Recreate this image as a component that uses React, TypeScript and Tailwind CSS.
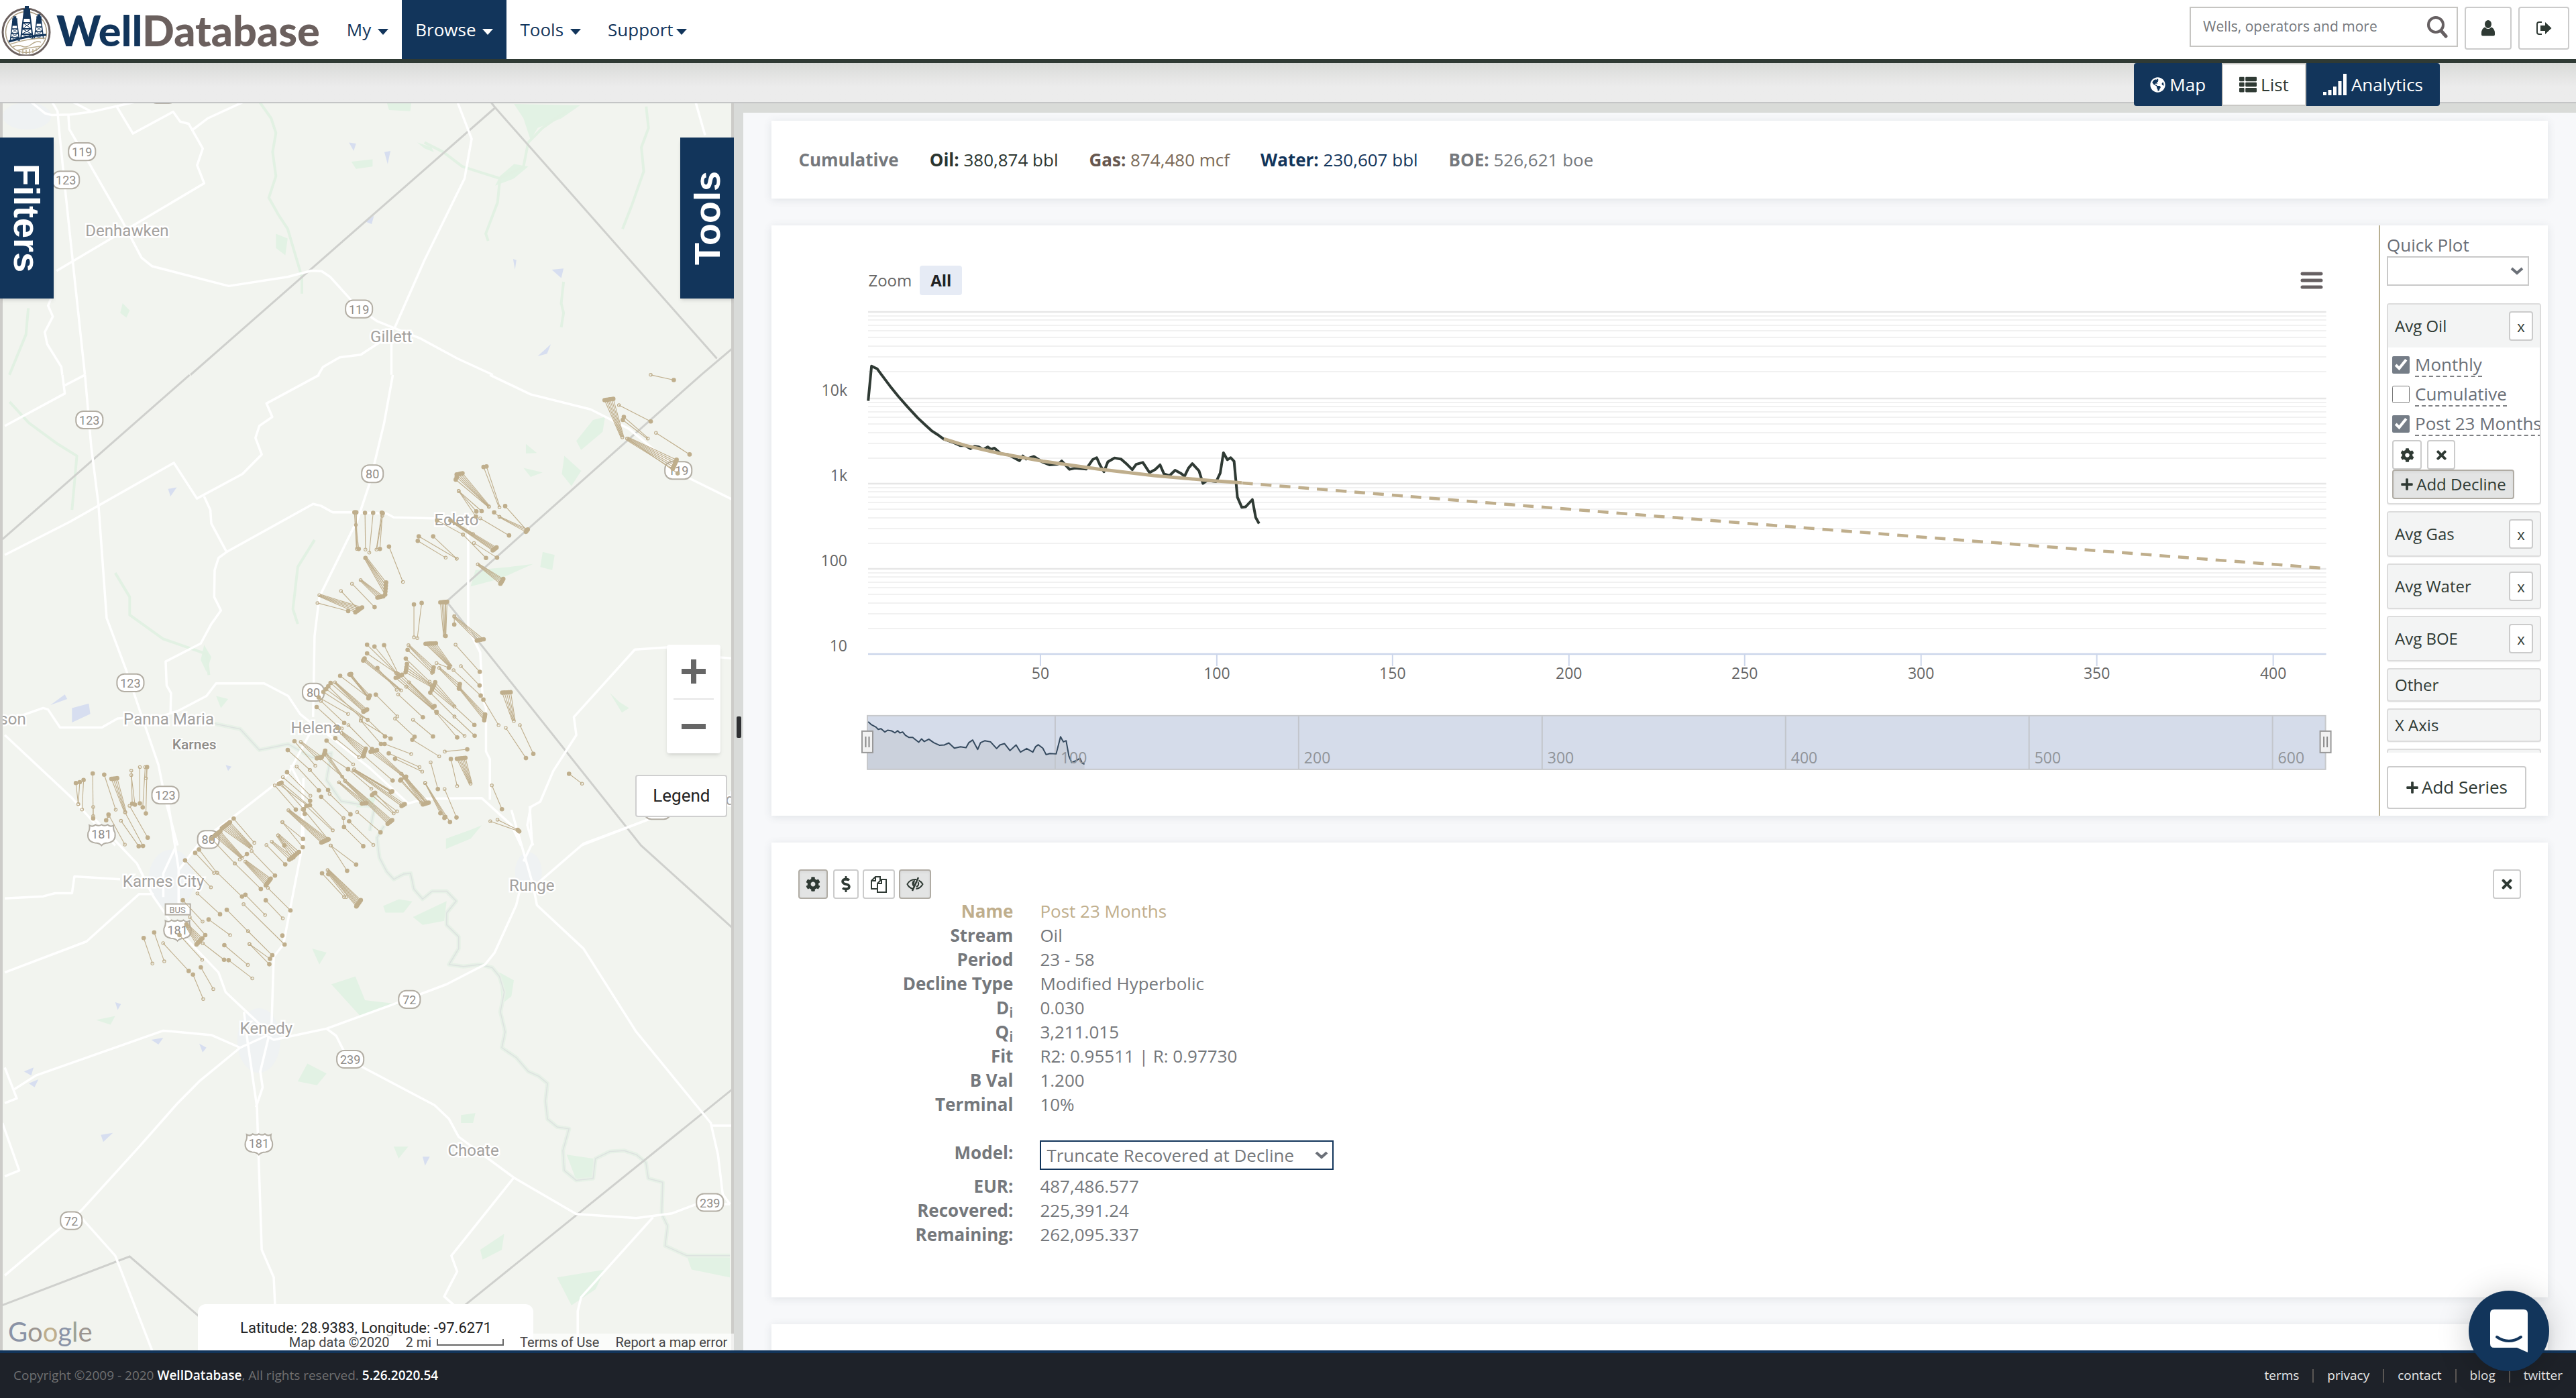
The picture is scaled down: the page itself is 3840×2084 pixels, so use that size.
import React from "react";
import { FaCog, FaTimes, FaPlus, FaGlobeAmericas, FaThList, FaDollarSign } from "react-icons/fa";

/* ---------- small icons ---------- */

const Caret = () => (
  <svg viewBox="0 0 16 9" className="w-4 h-[9px]" fill="currentColor" aria-hidden="true">
    <path d="M0 0h16L8 9z" />
  </svg>
);

const Chevron = () => (
  <svg viewBox="0 0 20 14" className="pointer-events-none absolute right-2 top-1/2 -mt-[7px] w-5 h-[14px]" fill="none" stroke="#6b7078" strokeWidth="4" aria-hidden="true">
    <path d="M2 3l8 7 8-7" />
  </svg>
);

const SearchIcon = () => (
  <svg viewBox="0 0 32 34" className="w-8 h-[34px]" fill="none" stroke="#666062" aria-hidden="true">
    <circle cx="13" cy="14" r="11" strokeWidth="4" />
    <path d="M21 23l7 8" strokeWidth="5" strokeLinecap="round" />
  </svg>
);

const UserIcon = () => (
  <svg viewBox="0 0 20 24" className="w-5 h-6" fill="#2f3a34" aria-hidden="true">
    <ellipse cx="10" cy="6" rx="5" ry="6" />
    <path d="M5 10.500q5 5 10 0 5 2.500 5 9v2q0 2-2 2H2q-2 0-2-2v-2q0-6.500 5-9z" />
  </svg>
);

const LogoutIcon = () => (
  <svg viewBox="0 0 24 22" className="w-6 h-[22px]" aria-hidden="true">
    <path d="M9 2H5Q2 2 2 5v12q0 3 3 3h4" fill="none" stroke="#2f3a34" strokeWidth="2" />
    <path d="M7 7h7V2l9.500 9-9.500 9v-5H7z" fill="#2f3a34" />
  </svg>
);

const SignalIcon = () => (
  <svg viewBox="0 0 36 32" className="w-9 h-8" fill="currentColor" aria-hidden="true">
    <path d="M0 27h5v5H0zM7.500 24h5v8h-5zM15 19h5v13h-5zM22.500 11h5v21h-5zM30 0h5v32h-5z" />
  </svg>
);

const CopyIcon = () => (
  <svg viewBox="0 0 26 26" className="w-[26px] h-[26px]" fill="#fff" stroke="#2f3a34" strokeWidth="2" aria-hidden="true">
    <path d="M8 2h7v18H2V8z" />
    <path d="M8 2v6H2" fill="none" />
    <path d="M17 6h7v19H11V12z" />
    <path d="M17 6v6h-6" fill="none" />
  </svg>
);

const EyeOffIcon = () => (
  <svg viewBox="0 0 26 22" className="w-[26px] h-[22px]" fill="none" stroke="#2f3a34" strokeWidth="2" aria-hidden="true">
    <path d="M10 18C6 17 3 14.500 1.500 11 4 6.500 8 4 13 4h2" />
    <path d="M18.500 5.500c2.500 1 4.500 3 6 5.500-2 4-5.500 6.500-10 7" />
    <path d="M18 1L9 21" strokeWidth="2.500" />
    <path d="M13 5c-5 0-6 7-2 10z" fill="#2f3a34" stroke="none" />
    <path d="M17.500 8c2 3 0 6-2.500 7" />
  </svg>
);

const Derrick = ({ x, y, s }: { x: number; y: number; s: number }) => (
  <g transform={`translate(${x} ${y}) scale(${s})`} stroke="#12355b" fill="none" strokeWidth="2">
    <path d="M-4 0L-9 40M4 0l5 40M-6 16H6M-7 25H7M-8 33H8" />
    <path d="M-6 16L7 25M6 16L-7 25M-7 25L8 33M7 25L-8 33M-8 33L9 40M8 33L-9 40" strokeWidth="1" />
    <path d="M-5-5H5V10H-5zM-3-9h6v4h-6z" fill="#12355b" stroke="none" />
  </g>
);

const LogoMark = () => (
  <svg viewBox="0 0 76 78" className="w-[76px] h-[78px]" aria-hidden="true">
    <circle cx="39" cy="43" r="35" fill="#fff" stroke="#6b605e" strokeWidth="3" />
    <circle cx="39" cy="43" r="30.500" fill="none" stroke="#a89a80" strokeWidth="1.500" />
    <Derrick x={22} y={26} s={0.75} />
    <Derrick x={58} y={23} s={0.75} />
    <Derrick x={40} y={13} s={1} />
    <path d="M13 57q28-9 56-10" stroke="#12355b" strokeWidth="3" fill="none" />
    <path d="M15 61q26-9 52-9M19 65q8-4 14-1t14-3 14-3M26 70q16-4 34-6M29 70v5M34 69v6M39 69v7M44 68v7M49 68v6M54 67v4" stroke="#b9ab8c" strokeWidth="1.500" fill="none" />
  </svg>
);

/* ---------- map ---------- */

type Tile = { ox: number; oy: number; sx: number; sy: number };
const NORTH: Tile = { ox: 0, oy: 0, sx: 0.7015, sy: 0.3571 };
const MID: Tile = { ox: 0, oy: 560, sx: 0.7143, sy: 0.4464 };
const SOUTH: Tile = { ox: 0, oy: 1160, sx: 0.7143, sy: 0.5893 };
const HELENA: Tile = { ox: 400, oy: 940, sx: 0.3333, sy: 0.3333 };
const KARNES: Tile = { ox: 180, oy: 1140, sx: 0.3333, sy: 0.3333 };

const px = (t: Tile, x: number) => Math.round((t.ox + x * t.sx) * 10) / 10;
const py = (t: Tile, y: number) => Math.round((t.oy + y * t.sy) * 10) / 10;
const line = (t: Tile, p: number[]) => {
  let out = "";
  for (let i = 0; i < p.length; i += 2) out += `${px(t, p[i])},${py(t, p[i + 1])} `;
  return out;
};

const roads: [Tile, number[][]][] = [
  [NORTH, [
    [65, 430, 95, 478, 110, 486, 150, 484, 195, 472, 285, 432],
    [110, 430, 122, 470, 126, 560, 140, 830, 160, 1200, 180, 1568],
    [145, 486, 147, 545, 190, 690, 260, 930, 300, 1080, 322, 1115, 485, 1198, 610, 1160, 660, 1134, 682, 1136, 700, 1160, 760, 1290, 800, 1345, 838, 1375, 890, 1415, 970, 1500, 1045, 1568],
    [155, 432, 192, 470],
    [248, 452, 282, 563, 367, 472, 382, 513, 400, 522, 430, 625, 418, 695, 433, 770, 270, 960, 120, 1135],
    [408, 548, 440, 500, 515, 432],
    [970, 432, 1000, 585, 985, 750, 900, 1090, 836, 1375],
    [830, 1400, 830, 1568],
    [815, 1420, 765, 1484, 720, 1495, 685, 1535, 675, 1568],
    [1475, 432, 1495, 570],
    [108, 1250, 102, 1280, 112, 1325, 95, 1390, 100, 1440, 130, 1535, 132, 1568],
  ]],
  [MID, [
    [177, 0, 190, 240, 205, 430, 222, 810, 262, 980, 300, 1160, 330, 1300, 345, 1420, 370, 1568],
    [130, 0, 135, 62, 10, 170], [135, 35, 177, 0],
    [10, 600, 145, 490, 362, 293, 410, 412, 505, 330, 545, 265, 532, 210, 540, 170, 567, 140, 555, 95, 665, 0],
    [425, 405, 438, 450, 440, 495, 472, 590, 455, 610, 447, 650, 446, 740, 460, 785, 440, 830, 418, 895, 345, 955, 347, 1035, 356, 1060, 355, 1130],
    [472, 590, 652, 430, 668, 436, 693, 458, 740, 458, 805, 462, 820, 475, 905, 478, 975, 490],
    [818, 0, 800, 160, 770, 360, 745, 480, 665, 740, 655, 870, 652, 1140],
    [975, 490, 975, 845, 1000, 925, 1005, 1080, 1012, 1110, 1012, 1255, 1020, 1280, 1020, 1415],
    [1020, 0, 1105, 65, 1230, 115, 1310, 180, 1430, 340, 1525, 415],
    [0, 1160, 90, 1110, 100, 1115, 125, 1175, 212, 1175, 245, 1145, 340, 1135, 370, 1120, 430, 1070, 450, 1028, 550, 1028, 600, 1070, 625, 1130, 652, 1165],
    [10, 1200, 150, 1410, 200, 1500, 240, 1568],
    [680, 1195, 770, 1310, 850, 1428, 885, 1412, 1003, 1410, 1065, 1500, 1085, 1568],
    [650, 1180, 600, 1330, 480, 1480, 420, 1550, 372, 1650],
    [605, 1300, 630, 1380, 632, 1568],
    [1525, 945, 1490, 940, 1390, 908, 1322, 915, 1195, 1140, 1200, 1200, 1152, 1320, 1125, 1422, 1105, 1440, 1098, 1500, 1110, 1568],
    [1210, 1568, 1385, 1460],
  ]],
  [SOUTH, [
    [195, 100, 285, 215, 320, 300, 360, 370, 455, 490, 470, 540, 540, 620, 555, 650, 570, 660, 610, 650, 680, 632, 820, 570, 930, 520, 1010, 470, 1030, 440, 1075, 320, 1085, 270],
    [350, 60, 365, 175, 372, 230, 372, 320],
    [365, 175, 340, 240, 340, 300],
    [632, 0, 628, 180, 590, 420, 570, 450, 565, 640],
    [10, 303, 90, 298, 115, 290, 150, 290, 155, 248, 250, 255],
    [10, 490, 180, 412, 290, 292, 320, 292],
    [500, 680, 440, 648, 340, 637, 75, 750, 30, 785],
    [555, 650, 500, 680, 415, 765, 370, 820, 290, 930, 170, 1090, 10, 1255],
    [170, 1110, 240, 1205, 318, 1448],
    [508, 590, 515, 660, 535, 830, 545, 1190, 570, 1260, 573, 1340],
    [560, 650, 542, 740, 547, 780, 533, 830],
    [680, 632, 700, 650, 725, 710, 905, 825, 935, 860, 955, 905, 1070, 1008, 1200, 1100, 1325, 1110, 1400, 1098, 1450, 1075, 1520, 1075],
    [1070, 1008, 940, 1205, 952, 1245, 925, 1308, 950, 1335],
    [1360, 1108, 1210, 1310, 1203, 1345, 1203, 1448],
    [1065, 80, 1110, 270, 1118, 320, 1215, 430, 1325, 640, 1480, 870, 1495, 950, 1505, 1050, 1520, 1075],
    [1480, 877, 1525, 877], [1115, 270, 1215, 165, 1370, 95], [1103, 70, 1108, 165, 1090, 210],
    [10, 730, 35, 808, 10, 820], [5, 870, 40, 990, 10, 1005],
  ]],
];

const borders: [Tile, number[]][] = [
  [NORTH, [1040, 430, 1050, 455, 404, 1568]],
  [NORTH, [1050, 455, 1520, 1500]],
  [MID, [395, 0, 5, 548]],
  [MID, [1530, -95, 1460, 0, 930, 755, 1335, 1568, 1530, 1850]],
  [SOUTH, [1530, 780, 968, 1330]],
  [SOUTH, [5, 1330, 270, 1207, 440, 1385]],
];

const streams: [Tile, number[]][] = [
  [NORTH, [550, 430, 575, 500, 585, 560, 578, 640, 585, 740, 570, 830, 590, 900, 610, 960, 625, 1060, 640, 1160, 640, 1230]],
  [NORTH, [1370, 450, 1375, 540, 1360, 620, 1365, 720, 1340, 860, 1320, 960]],
  [NORTH, [1200, 470, 1150, 540, 1120, 600, 1110, 700, 1060, 750, 1055, 850, 1030, 980, 1035, 1010]],
  [NORTH, [900, 600, 940, 640, 980, 700, 1020, 725, 1060, 750]],
  [NORTH, [1195, 1180, 1190, 1270, 1195, 1310, 1190, 1370]],
  [NORTH, [60, 1290, 55, 1400, 20, 1568]],
  [MID, [20, 90, 60, 160, 120, 230, 160, 270, 150, 450]],
  [MID, [240, 660, 270, 740, 270, 800, 340, 880, 430, 930, 435, 1000]],
  [MID, [655, 550, 620, 640, 610, 780, 620, 830]],
];

const rivers: [Tile, number[]][] = [
  [SOUTH, [1000, 470, 1025, 478, 1040, 500, 1050, 540, 1042, 590, 1052, 640, 1045, 680, 1075, 705, 1100, 740, 1122, 752, 1140, 770, 1136, 815, 1140, 860, 1160, 880, 1185, 885, 1172, 940, 1175, 990, 1200, 1015, 1235, 1010, 1240, 960, 1270, 942, 1300, 940, 1325, 950, 1345, 970, 1350, 1010, 1380, 1020, 1378, 1100, 1390, 1130, 1385, 1180, 1430, 1205, 1520, 1205]],
  [SOUTH, [800, 120, 785, 150, 790, 200, 805, 235, 820, 255, 840, 242, 855, 240, 862, 280, 880, 305, 900, 285, 930, 285, 950, 310, 930, 340, 930, 370, 955, 400, 955, 430, 935, 470, 965, 475, 1000, 470]],
  [MID, [440, 1160, 500, 1180, 540, 1250, 600, 1230, 650, 1275, 690, 1260, 680, 1350, 710, 1420, 780, 1440, 770, 1520]],
];

const parks: [Tile, number[]][] = [
  [NORTH, [820, 432, 872, 435, 870, 470, 825, 465]],
  [NORTH, [1090, 440, 1230, 445, 1190, 500, 1140, 540, 1125, 590, 1110, 500]],
  [NORTH, [1090, 690, 1120, 700, 1090, 750, 1050, 780, 1060, 740]],
  [NORTH, [585, 980, 610, 1000, 605, 1070, 585, 1040]],
  [NORTH, [745, 680, 790, 670, 790, 700, 755, 710]],
  [NORTH, [885, 600, 915, 620, 920, 640, 900, 625]],
  [NORTH, [260, 1270, 275, 1300, 268, 1330, 255, 1310]],
  [MID, [1235, 150, 1260, 140, 1255, 190, 1210, 250, 1200, 220]],
  [MID, [1175, 270, 1210, 320, 1190, 370, 1170, 330]],
  [MID, [1095, 230, 1118, 260, 1095, 262]],
  [MID, [1090, 310, 1130, 325, 1105, 340]],
  [MID, [990, 650, 1060, 640, 1110, 630, 1040, 680, 980, 705]],
  [MID, [1130, 590, 1155, 600, 1150, 650, 1125, 640]],
  [MID, [1270, 1060, 1290, 1090, 1310, 1110, 1295, 1125]],
  [MID, [425, 900, 440, 940, 430, 990, 418, 950]],
  [MID, [450, 1070, 475, 1080, 460, 1110]],
  [SOUTH, [690, 520, 740, 500, 760, 560, 830, 570, 770, 590, 750, 600]],
  [SOUTH, [860, 350, 930, 310, 925, 360, 880, 370]],
  [SOUTH, [1040, 490, 1070, 510, 1065, 550, 1045, 570]],
  [SOUTH, [650, 430, 680, 440, 665, 470]],
  [SOUTH, [640, 720, 680, 745, 660, 775, 620, 765]],
  [SOUTH, [1180, 950, 1235, 960, 1235, 1010, 1200, 1015]],
  [SOUTH, [1000, 1190, 1050, 1150, 1045, 1190, 1005, 1215]],
  [SOUTH, [1160, 1260, 1260, 1240, 1240, 1290, 1190, 1330]],
  [SOUTH, [1430, 1205, 1520, 1210, 1520, 1260, 1440, 1240]],
  [SOUTH, [960, 850, 990, 845, 985, 870, 960, 870]],
  [SOUTH, [820, 930, 850, 930, 830, 960]],
  [SOUTH, [200, 610, 240, 600, 230, 622]],
  [HELENA, [400, 760, 480, 740, 460, 790, 390, 790]],
  [HELENA, [790, 930, 900, 890, 950, 870, 900, 930, 790, 975]],
  [HELENA, [510, 1230, 580, 1200, 640, 1210, 600, 1260, 520, 1260]],
];

const lakes: [Tile, number[]][] = [
  [NORTH, [740, 600, 755, 605, 750, 635]], [NORTH, [815, 640, 828, 635, 822, 690]],
  [NORTH, [775, 930, 793, 905, 788, 940]], [NORTH, [1170, 1130, 1195, 1125, 1190, 1165]],
  [NORTH, [1088, 1085, 1095, 1090, 1092, 1130]], [NORTH, [1140, 1490, 1168, 1440, 1160, 1480]],
  [MID, [150, 1110, 185, 1095, 188, 1130, 150, 1158]], [MID, [105, 1100, 135, 1065, 140, 1080]],
  [MID, [470, 1300, 482, 1305, 475, 1320]], [MID, [350, 380, 368, 375, 355, 405]],
  [SOUTH, [50, 740, 70, 730, 65, 750]], [SOUTH, [60, 770, 80, 760, 72, 780]],
  [SOUTH, [315, 660, 340, 655, 330, 672]], [SOUTH, [415, 670, 430, 680, 422, 692]],
  [SOUTH, [210, 900, 235, 895, 215, 918]], [SOUTH, [880, 955, 895, 955, 885, 978]],
  [SOUTH, [240, 565, 252, 570, 245, 585]],
];

/* surface x, surface y, bottom x, bottom y, lateral count, pad width, pad height */
type Well = number[];
const wells: [Tile, Well[]][] = [
  [HELENA, [
    [438, 64, 577, 200], [471, 72, 572, 192], [514, 66, 578, 195], [438, 103, 566, 190], [424, 130, 590, 268, 3, 6, 10], [484, 168, 570, 265],
    [619, 87, 728, 190], [733, 175, 623, 66, 3, 4, 20], [611, 126, 717, 229], [616, 150, 720, 240], [612, 176, 726, 250, 3, 4, 22],
    [722, 59, 810, 160, 6, 46, 2], [941, 185, 833, 64], [940, 246, 857, 160], [850, 250, 760, 168, 3, 4, 20], [803, 167, 748, 146], [945, 291, 824, 178],
    [963, 388, 852, 260, 4, 4, 26], [957, 309, 1025, 423], [1060, 277, 1093, 405, 5, 38, 2], [1147, 570, 1057, 435], [1180, 551, 1120, 423],
    [885, 531, 785, 541], [812, 574, 840, 695], [858, 571, 900, 684, 6, 38, 4], [754, 708, 722, 589], [765, 816, 697, 681], [785, 835, 697, 681, 2, 4, 4],
    [808, 855, 697, 681], [837, 835, 784, 708], [1040, 798, 995, 692], [1117, 897, 988, 852], [1110, 890, 1020, 845], [732, 473, 643, 399],
    [650, 475, 563, 394], [477, 287, 573, 384], [687, 388, 577, 286], [640, 488, 760, 562], [720, 278, 828, 385], [735, 248, 828, 340, 4, 14, 32],
    [917, 422, 828, 340], [918, 470, 828, 385], [580, 205, 730, 345, 4, 28, 14], [736, 340, 626, 232, 2, 6, 4], [748, 364, 613, 252],
    [840, 478, 748, 370], [748, 364, 873, 471], [318, 203, 445, 300], [363, 196, 447, 302, 3, 8, 2], [447, 297, 363, 200, 2, 6, 12],
    [430, 358, 295, 232, 4, 16, 10], [275, 235, 420, 360], [265, 250, 412, 392], [255, 262, 440, 398], [243, 275, 440, 400], [222, 299, 353, 373], [336, 413, 232, 315],
    [213, 342, 315, 435], [305, 435, 325, 438], [460, 530, 355, 423], [518, 473, 440, 398], [543, 483, 410, 403], [500, 507, 410, 403], [516, 507, 635, 552],
    [426, 545, 325, 458, 5, 12, 34], [296, 481, 402, 566], [257, 492, 376, 598], [468, 538, 590, 640, 4, 28, 8], [535, 549, 672, 610], [563, 573, 684, 630],
    [552, 670, 425, 560], [114, 495, 207, 604], [225, 568, 142, 498, 3, 22, 6], [84, 534, 183, 623], [223, 714, 124, 608], [264, 713, 183, 623],
    [249, 545, 340, 670, 3, 4, 16], [353, 619, 249, 550], [230, 570, 327, 653], [353, 619, 457, 707], [547, 720, 380, 620, 4, 6, 4], [599, 780, 378, 625, 3, 14, 8],
    [81, 633, 185, 738], [184, 761, 62, 655], [120, 800, 26, 692], [50, 683, 175, 782, 2, 12, 6], [175, 782, 285, 892, 2, 16, 4], [155, 798, 50, 680], [160, 819, 150, 800],
    [425, 772, 313, 678, 3, 20, 2], [540, 855, 340, 672, 5, 20, 16], [467, 730, 557, 817, 2, 14, 10], [467, 728, 572, 808], [700, 773, 592, 640, 5, 26, 8],
    [588, 668, 680, 770, 2, 4, 4], [609, 655, 700, 768, 2, 6, 4], [364, 821, 271, 730], [233, 743, 333, 838], [335, 878, 333, 838], [250, 940, 87, 803, 6, 32, 14],
    [155, 800, 262, 930], [152, 931, 60, 856], [151, 968, 60, 856], [118, 1002, 41, 915, 5, 32, 26], [100, 1018, 13, 943, 3, 18, 10], [69, 960, 41, 915],
    [421, 963, 335, 878], [358, 852, 466, 957], [498, 901, 394, 811], [389, 1045, 276, 960], [349, 1073, 276, 960], [237, 1084, 335, 1190],
    [400, 1218, 262, 1070, 7, 20, 28], [265, 1088, 345, 1190],
  ]],
  [KARNES, [
    [503, 240, 595, 348], [468, 270, 580, 368, 7, 36, 28], [430, 307, 540, 415, 6, 26, 20], [404, 330, 508, 440], [624, 554, 508, 440], [687, 494, 583, 385],
    [657, 523, 555, 432, 6, 22, 30], [348, 378, 427, 480], [331, 393, 415, 482], [286, 426, 401, 547], [442, 667, 341, 574], [540, 588, 430, 482],
    [276, 605, 364, 699], [472, 647, 567, 743], [675, 850, 567, 743], [730, 802, 547, 622], [555, 580, 643, 670], [756, 650, 656, 550], [646, 605, 722, 685],
    [720, 762, 720, 762], [391, 690, 487, 760], [376, 760, 307, 680], [350, 788, 292, 715, 6, 26, 28], [292, 712, 300, 720], [261, 760, 362, 870],
    [460, 870, 365, 797], [461, 805, 566, 893], [480, 872, 586, 953], [665, 866, 573, 800], [662, 890, 573, 800], [302, 920, 188, 796],
    [148, 748, 193, 877], [101, 773, 140, 887], [321, 936, 367, 1045], [356, 904, 412, 1001], [733, 444, 649, 358],
    [50, 173, 46, 26], [62, 178, 46, 46], [84, 172, 84, 10], [97, 190, 108, 10], [116, 10, 111, 60], [111, 217, 116, 10], [119, 325, 38, 183],
    [98, 362, 18, 212], [79, 363, 0, 250], [562, 398, 530, 422],
  ]],
  [MID, [
    [158, 1360, 163, 1430], [166, 1357, 163, 1430], [174, 1350, 171, 1448], [193, 1328, 194, 1470], [194, 1478, 194, 1440], [217, 1332, 241, 1449],
    [238, 1345, 261, 1457, 4, 12, 2], [226, 1465, 260, 1565], [221, 1484, 226, 1470],
    [1268, 82, 1296, 208, 6, 18, 4], [1405, 298, 1306, 212, 6, 8, 30], [1355, 155, 1289, 101], [1298, 145, 1349, 212, 2, 2, 10], [1436, 265, 1366, 193],
    [1403, 17, 1355, 0], [1411, 328, 1306, 212], [957, 330, 1018, 438, 4, 12, 4], [950, 345, 1018, 440, 2, 2, 8], [1010, 306, 1040, 441, 2, 6, 2],
    [1003, 454, 955, 387], [991, 472, 955, 387], [992, 455, 955, 387], [1052, 437, 1097, 518], [1097, 519, 1040, 473, 3, 4, 8], [1060, 535, 1000, 478], [1029, 458, 1040, 473],
    [740, 458, 743, 580, 3, 4, 0], [760, 460, 761, 582], [777, 460, 769, 592], [796, 460, 784, 582, 2, 2, 2], [747, 580, 741, 500], [791, 580, 796, 470], [810, 572, 839, 690],
    [761, 610, 803, 700], [803, 712, 761, 610, 5, 2, 40], [792, 740, 751, 684, 4, 12, 4], [780, 774, 733, 696], [745, 780, 710, 720], [747, 783, 665, 734, 5, 14, 16], [725, 787, 661, 760],
    [872, 538, 951, 612], [870, 553, 928, 609], [902, 538, 951, 612], [1030, 580, 938, 485, 5, 8, 10], [938, 485, 985, 530], [910, 485, 964, 532], [1012, 610, 964, 532], [1035, 609, 987, 560],
    [1045, 688, 995, 631, 5, 6, 16], [862, 765, 862, 874], [878, 760, 869, 877], [924, 757, 926, 870, 5, 14, 2], [928, 870, 928, 760], [946, 832, 946, 803], [1000, 883, 946, 806, 4, 14, 4],
    [1185, 1329, 1212, 1362],
  ]],
];

const WellLine = ({ t, w }: { t: Tile; w: Well }) => {
  const [hx, hy, bx, by, n = 1, sw = 0, sh = 0] = w;
  const laterals = Array.from({ length: n }, (_, i) => {
    const f = n > 1 ? i / (n - 1) - 0.5 : 0;
    const slope = by - hy > 0 === bx - hx > 0 ? -1 : 1;
    return {
      x: px(t, hx + f * sw),
      y: py(t, hy + f * sh * slope),
      x2: px(t, bx + (f * sw) / 3),
      y2: py(t, by + (f * sh * slope) / 3),
    };
  });
  return (
    <>
      {laterals.map((l, i) => (
        <React.Fragment key={i}>
          <line x1={l.x} y1={l.y} x2={l.x2} y2={l.y2} />
          <circle cx={l.x} cy={l.y} r="3.300" fill="#bfae8c" stroke="none" />
        </React.Fragment>
      ))}
      <circle cx={px(t, bx)} cy={py(t, by)} r="2.200" fill="none" />
    </>
  );
};

const shields: [string, number, number][] = [
  ["", 242, 143], ["119", 122, 228], ["123", 98, 270], ["119", 534, 462], ["123", 133, 627], ["80", 554, 707], ["119", 1009, 702], ["123", 194, 1018],
  ["80", 466, 1032], ["123", 246, 1185], ["80", 310, 1251], ["72", 609, 1489], ["239", 521, 1578], ["72", 106, 1818], ["239", 1056, 1791], ["", 978, 1208],
];
const usShields: [string, number, number][] = [["181", 151, 1242], ["181", 264, 1384], ["181", 385, 1702]];
const towns: [string, number, number][] = [
  ["Denhawken", 189, 346], ["Gillett", 582, 503], ["Ecleto", 679, 776], ["Panna Maria", 251, 1072], ["Helena", 470, 1085], ["son", 19, 1072],
  ["Karnes City", 243, 1313], ["Runge", 791, 1319], ["Kenedy", 396, 1532], ["Choate", 704, 1714], ["d", 1086, 1192],
];

const MapCanvas = () => (
  <svg viewBox="0 155 1092 1857" preserveAspectRatio="xMidYMid slice" className="absolute inset-0 w-full h-full" role="img" aria-label="Well map">
    <rect x="0" y="155" width="1092" height="1857" fill="#f2f4ef" />
    <g fill="#eff2f3">
      <ellipse cx="255" cy="1310" rx="34" ry="44" />
      <ellipse cx="385" cy="1550" rx="32" ry="48" />
      <ellipse cx="786" cy="1300" rx="20" ry="30" />
      <ellipse cx="40" cy="175" rx="36" ry="20" />
    </g>
    <g fill="#e2f2e4">{parks.map(([t, p], i) => <polygon key={i} points={line(t, p)} />)}</g>
    <g fill="none" stroke="#e2f1e3" strokeWidth="4" strokeLinejoin="round">{streams.map(([t, p], i) => <polyline key={i} points={line(t, p)} />)}</g>
    <g fill="none" stroke="#e7f1e7" strokeWidth="6" strokeLinejoin="round">{rivers.map(([t, p], i) => <polyline key={i} points={line(t, p)} />)}</g>
    <g fill="none" stroke="#dde2e0" strokeWidth="1.500" strokeLinejoin="round">{rivers.map(([t, p], i) => <polyline key={i} points={line(t, p)} />)}</g>
    <g fill="#d7def0">{lakes.map(([t, p], i) => <polygon key={i} points={line(t, p)} />)}</g>
    <g fill="none" stroke="#cfd0cd" strokeWidth="3">{borders.map(([t, p], i) => <polyline key={i} points={line(t, p)} />)}</g>
    <g fill="none" stroke="#fff" strokeWidth="3.500" strokeLinejoin="round">
      {roads.map(([t, list]) => list.map((p, i) => <polyline key={t.oy + "-" + i} points={line(t, p)} />))}
    </g>
    <g fontFamily="Roboto, sans-serif" textAnchor="middle">
      {shields.map(([s, x, y], i) => (
        <g key={i}>
          <rect x={x - (s.length === 2 ? 16 : 20)} y={y - 13} width={s.length === 2 ? 32 : 40} height="26" rx="11" fill="#fff" stroke="#b3aea4" strokeWidth="2" />
          <text x={x} y={y + 7} fontSize="18" fill="#8f8c88">{s}</text>
        </g>
      ))}
      {usShields.map(([s, x, y], i) => (
        <g key={i}>
          <path d={`M${x - 18} ${y - 12}q5 3 9-1 5 3 9 0 5 3 9 0 4 4 9 1-1 6 2 11 2 13-10 15-7 0-10 4-3-4-10-4-12-2-10-15 3-5 2-11z`} fill="#fff" stroke="#b3aea4" strokeWidth="2" />
          <text x={x} y={y + 8} fontSize="18" fill="#8f8c88">{s}</text>
        </g>
      ))}
      <rect x="246" y="1347" width="37" height="16" fill="#fff" stroke="#b3aea4" strokeWidth="2" />
      <text x="264" y="1360" fontSize="13" fill="#8f8c88">BUS</text>
      {towns.map(([s, x, y]) => (
        <text key={s} x={x} y={y + 8} fontSize="24" fill="#a3a19e" stroke="#fff" strokeWidth="5" paintOrder="stroke">{s}</text>
      ))}
      <text x="289" y="1117" fontSize="21" fontWeight="500" fill="#8f8c88" stroke="#fff" strokeWidth="3" paintOrder="stroke">Karnes</text>
    </g>
    <g stroke="#bfae8c" strokeWidth="1.100">
      {wells.map(([t, list]) => list.map((w, i) => <WellLine key={t.ox + "-" + t.oy + "-" + i} t={t} w={w} />))}
    </g>
  </svg>
);

const MapPane = () => (
  <section aria-label="Map" className="relative w-[28.5%] shrink-0 overflow-hidden font-[Roboto,sans-serif]">
    <MapCanvas />
    <div className="pointer-events-none absolute inset-0 border-l-4 border-r-4 border-[#cdccc9]" />
    <button className="absolute left-0 top-[51px] flex h-60 w-20 items-center justify-center bg-[#12355b] shadow-md">
      <span className="text-[54px] font-bold leading-none text-white font-['Liberation_Sans',sans-serif] [writing-mode:vertical-rl]">Filters</span>
    </button>
    <button className="absolute right-0 top-[51px] flex h-60 w-20 items-center justify-center bg-[#12355b] shadow-md">
      <span className="rotate-180 text-[54px] font-bold leading-none text-white font-['Liberation_Sans',sans-serif] [writing-mode:vertical-rl]">Tools</span>
    </button>
    <div className="absolute bottom-[890px] right-5 flex w-20 flex-col items-center rounded-sm bg-white shadow-md">
      <button aria-label="Zoom in" className="flex h-20 w-full items-center justify-center">
        <svg viewBox="0 0 36 36" className="size-9" fill="#666"><path d="M14 0h8v14h14v8H22v14h-8V22H0v-8h14z" /></svg>
      </button>
      <div className="h-0.5 w-[60px] bg-[#e6e6e6]" />
      <button aria-label="Zoom out" className="flex h-20 w-full items-center justify-center">
        <svg viewBox="0 0 36 36" className="size-9" fill="#666"><path d="M0 14h36v8H0z" /></svg>
      </button>
    </div>
    <button className="absolute bottom-[795px] right-2.5 h-[63px] w-[137px] rounded-sm border-2 border-[#cfcfcf] bg-white text-[26px] text-[#222]">Legend</button>
    <div className="absolute bottom-0 left-[27%] h-[69px] w-[500px] rounded-t-xl bg-white pt-[22px] text-center text-[22px] leading-7 text-[#222]">
      Latitude: 28.9383, Longitude: -97.6271
    </div>
    <div className="absolute bottom-1 left-3 text-[40px] leading-[48px] font-[Lato,sans-serif]" aria-label="Google">
      <span className="text-[#8a93a6]">G</span><span className="text-[#9b9590]">o</span><span className="text-[#bfae8c]">o</span><span className="text-[#8a93a6]">g</span><span className="text-[#9aa39a]">l</span><span className="text-[#9b9590]">e</span>
    </div>
    <div className="absolute bottom-0 right-0 flex h-[25px] items-center gap-6 bg-white/70 px-2.5 text-xl leading-6 text-[#444]">
      <span>Map data ©2020</span>
      <span className="flex items-center gap-2">2 mi<span className="h-2.5 w-[100px] border-2 border-t-0 border-[#666]" /></span>
      <a href="#terms-of-use">Terms of Use</a>
      <a href="#report">Report a map error</a>
    </div>
  </section>
);

/* ---------- header ---------- */

const NavItem = ({ label, active, tight }: { label: string; active?: boolean; tight?: boolean }) => (
  <button className={active ? "flex h-full items-center gap-2.5 bg-[#12355b] px-5 text-white" : "flex h-full items-center px-5 text-[#12355b]"}>
    {label}
    <span className={active ? "pt-1.5" : tight ? "pl-1 pt-1.5" : "pl-2.5 pt-1.5"}><Caret /></span>
  </button>
);

const Header = () => (
  <header className="flex h-[94px] shrink-0 items-stretch border-b-[6px] border-[#2f3a34] bg-white">
    <a href="#home" className="flex items-center gap-2 pr-5" aria-label="WellDatabase">
      <LogoMark />
      <span className="text-[63px] font-black leading-none text-[#12355b] font-[Lato,sans-serif]">Well<span className="text-[#6b605e]">Database</span></span>
    </a>
    <nav className="flex text-[26px]">
      <NavItem label="My" />
      <NavItem label="Browse" active />
      <NavItem label="Tools" />
      <NavItem label="Support" tight />
    </nav>
    <div className="ml-auto flex items-start gap-2.5 pr-2.5 pt-2.5">
      <div className="flex h-[60px] w-[400px] items-center border-2 border-[#c6c5c2] pl-[18px] pr-3">
        <input aria-label="Search" placeholder="Wells, operators and more" className="min-w-0 flex-1 text-[21px] placeholder-[#75787c] outline-none" />
        <button aria-label="Search wells"><SearchIcon /></button>
      </div>
      <button aria-label="Account" className="flex h-16 w-[70px] items-center justify-center rounded border-2 border-[#cbcbcb] bg-white"><UserIcon /></button>
      <button aria-label="Log out" className="flex h-16 w-[76px] items-center justify-center rounded border-2 border-[#cbcbcb] bg-white"><LogoutIcon /></button>
    </div>
  </header>
);

const SubBar = () => (
  <div className="z-10 flex h-[60px] shrink-0 items-start justify-end border-b-2 border-[#c4c5c6] bg-linear-to-b from-[#d9dad8] to-[#ececec] to-60% pr-[203px] text-[26px]">
    <div className="flex h-16">
      <button className="flex h-16 items-center gap-1.5 rounded-l bg-[#12355b] px-6 text-white"><FaGlobeAmericas size={23} />Map</button>
      <button className="flex h-16 items-center gap-1.5 border-2 border-[#c9c8c5] bg-white px-6 text-[#2f3a34]"><FaThList size={26} />List</button>
      <button className="flex h-16 items-center gap-1.5 rounded-r bg-[#12355b] px-[25px] text-white"><SignalIcon />Analytics</button>
    </div>
  </div>
);

/* ---------- chart ---------- */

const PLOT: Tile = { ox: 1140, oy: 160, sx: 0.829, sy: 0.4464 };
const NAV: Tile = { ox: 1140, oy: 860, sx: 0.829, sy: 0.3333 };

const oilSeries = [186, 980, 192, 864, 202, 873, 210, 893, 225, 930, 240, 965, 258, 1003, 275, 1037, 290, 1063, 300, 1080, 310, 1092, 322, 1108, 340, 1120, 352, 1130, 360, 1129, 370, 1140, 377, 1132, 385, 1134, 393, 1143, 401, 1134, 407, 1142, 413, 1138, 425, 1157, 438, 1160, 458, 1180, 464, 1164, 470, 1175, 484, 1166, 500, 1185, 512, 1194, 527, 1192, 534, 1181, 548, 1209, 558, 1205, 578, 1208, 590, 1176, 597, 1170, 603, 1195, 610, 1217, 617, 1184, 629, 1171, 641, 1175, 652, 1193, 661, 1210, 668, 1192, 680, 1186, 692, 1220, 702, 1210, 711, 1194, 718, 1224, 728, 1230, 738, 1212, 748, 1222, 755, 1232, 762, 1205, 769, 1190, 781, 1214, 788, 1256, 796, 1246, 812, 1250, 819, 1222, 825, 1154, 832, 1177, 838, 1170, 844, 1182, 850, 1302, 858, 1336, 865, 1334, 877, 1310, 883, 1370, 889, 1390];
const declineFit = [322, 1107, 360, 1129, 420, 1155, 500, 1182, 600, 1208, 700, 1230, 800, 1246, 858, 1254];
const overview = [186, 648, 192, 662, 200, 672, 204, 682, 209, 679, 216, 694, 221, 686, 228, 689, 234, 698, 239, 688, 243, 698, 248, 694, 253, 709, 259, 718, 266, 718, 277, 740, 282, 725, 287, 737, 295, 726, 304, 742, 314, 753, 323, 752, 331, 743, 341, 766, 352, 760, 362, 764, 367, 742, 374, 730, 383, 772, 388, 742, 396, 733, 406, 738, 417, 768, 423, 752, 431, 746, 441, 777, 452, 752, 460, 784, 471, 768, 482, 784, 487, 760, 492, 751, 500, 766, 506, 795, 513, 790, 524, 792, 532, 715, 537, 738, 542, 733, 547, 802, 552, 830, 560, 822, 567, 812, 571, 834, 575, 838];

const decades = [465, 594, 721, 848];
const minors = [2, 3, 4, 5, 6, 7, 8, 9].map((v) => Math.log10(v));

const Handle = ({ x }: { x: number }) => (
  <g>
    <rect x={x - 8} y="1090" width="16" height="32" fill="#f2f2f2" stroke="#999" strokeWidth="2" />
    <path d={`M${x - 2.5} 1098v16M${x + 2.5} 1098v16`} stroke="#888" strokeWidth="2" />
  </g>
);

const Chart = () => (
  <svg viewBox="1150 440 2396 776" className="block w-full" role="img" aria-label="Average oil production with decline forecast">
    {decades.map((y) => (
      <g key={y}>
        <path d={`M1294 ${y}H3468`} stroke="#e6e6e6" strokeWidth="2.500" />
        {minors.map((m) => <path key={m} d={`M1294 ${Math.round(y + 127.5 * (1 - m))}H3468`} stroke="#f1f1f1" strokeWidth="2" />)}
      </g>
    ))}
    <path d="M1294 975H3468" stroke="#ccd6eb" strokeWidth="2.500" />
    <g fontFamily="'Open Sans', sans-serif" fontSize="23" fill="#666">
      {["10k", "1k", "100", "10"].map((s, i) => <text key={s} x="1263" y={590 + i * 127} textAnchor="end">{s}</text>)}
      {[50, 100, 150, 200, 250, 300, 350, 400].map((v, i) => (
        <g key={v}>
          <path d={`M${Math.round(1551 + i * 262.5)} 975v18`} stroke="#ccd6eb" strokeWidth="2" />
          <text x={Math.round(1551 + i * 262.5)} y="1012" textAnchor="middle">{v}</text>
        </g>
      ))}
    </g>
    <polyline points={line(PLOT, oilSeries)} fill="none" stroke="#2f3a34" strokeWidth="4" strokeLinejoin="round" />
    <polyline points={line(PLOT, declineFit)} fill="none" stroke="#bfae8c" strokeWidth="5" />
    <path d="M1852 720Q2440 768 3462 847" fill="none" stroke="#bfae8c" strokeWidth="4.500" strokeDasharray="16 12" />

    <rect x="1293" y="1068" width="2174" height="79" fill="#d5dcea" />
    <path d={`M1294 1147 L${line(NAV, overview)} V1147z`} fill="#cbd1dc" />
    <g stroke="#c3c6cc" strokeWidth="2">{[0, 1, 2, 3, 4, 5].map((i) => <path key={i} d={`M${1573 + i * 363} 1068V1147`} />)}</g>
    <rect x="1293" y="1067" width="2174" height="80" fill="none" stroke="#c6c8cb" strokeWidth="2" />
    <polyline points={line(NAV, overview)} fill="none" stroke="#34495e" strokeWidth="2" strokeLinejoin="round" />
    <g fontFamily="'Open Sans', sans-serif" fontSize="23" fill="#909499">
      {[100, 200, 300, 400, 500, 600].map((v, i) => <text key={v} x={1581 + i * 363} y="1138">{v}</text>)}
    </g>
    <Handle x={1293} />
    <Handle x={3467} />
  </svg>
);

/* ---------- series side panel ---------- */

const SeriesHeader = ({ label }: { label: string }) => (
  <div className="flex h-16 items-center justify-between bg-[#f3f4f4] px-2.5 text-2xl text-[#2f3a34]">
    {label}
    <button aria-label={"Remove " + label} className="h-11 w-9 rounded border-2 border-[#cbcbcb] bg-white text-[22px] leading-none">x</button>
  </div>
);

const box = "shrink-0 overflow-hidden rounded border-2 border-[#dcdcdc] shadow-xs";
const smallButton = "flex h-11 items-center justify-center rounded border-2 border-[#cbcbcb] bg-white text-[#2f3a34]";
const pressedButton = "flex h-11 items-center justify-center rounded border-2 border-[#b0aca4] bg-[#e3e4e4] text-[#2f3a34] inset-shadow-sm";

const Check = ({ label, checked }: { label: string; checked?: boolean }) => (
  <label className="flex h-11 items-center gap-2 whitespace-nowrap text-[26px]">
    <input type="checkbox" defaultChecked={checked} className="size-[26px] shrink-0 accent-[#757d87]" />
    <span className="border-b-2 border-dashed border-[#7d7f82] leading-[34px]">{label}</span>
  </label>
);

const SeriesPanel = () => (
  <aside className="flex w-[252px] shrink-0 flex-col border-l-2 border-[#b8b092] px-2.5 pb-2.5 text-[#6b7078]">
    <label htmlFor="quick-plot" className="pt-3 text-[26px] leading-[34px]">Quick Plot</label>
    <div className="relative h-11 w-[212px] shrink-0">
      <select id="quick-plot" className="h-full w-full appearance-none border-2 border-[#c9c9c9] bg-white text-2xl"><option></option></select>
      <Chevron />
    </div>
    <div className="mt-[26px] flex min-h-0 flex-1 basis-0 flex-col gap-2.5 overflow-hidden">
      <div className={box}>
        <SeriesHeader label="Avg Oil" />
        <div className="px-1.5 pb-1.5 pt-1">
          <Check label="Monthly" checked />
          <Check label="Cumulative" />
          <Check label="Post 23 Months" checked />
          <div className="mt-0.5 flex gap-2">
            <button aria-label="Decline settings" className={smallButton + " w-11"}><FaCog size={21} /></button>
            <button aria-label="Remove decline" className={smallButton + " w-[42px]"}><FaTimes size={21} /></button>
          </div>
          <button className={pressedButton + " w-[182px] gap-1 text-2xl"}><FaPlus size={20} />Add Decline</button>
        </div>
      </div>
      {["Avg Gas", "Avg Water", "Avg BOE"].map((s) => <div key={s} className={box}><SeriesHeader label={s} /></div>)}
      {["Other", "X Axis"].map((s) => (
        <button key={s} className={box + " h-[50px] bg-[#f3f4f4] px-2.5 text-left text-2xl text-[#2f3a34]"}>{s}</button>
      ))}
      <button aria-label="Y Axis" className={box + " h-[50px] bg-[#f3f4f4]"} />
    </div>
    <button className="mt-5 flex h-16 w-[208px] items-center justify-center gap-1 rounded border-2 border-[#cbcbcb] bg-white text-[26px] text-[#2f3a34]"><FaPlus size={20} />Add Series</button>
  </aside>
);

/* ---------- cards ---------- */

const card = "shrink-0 bg-white shadow-[0_2px_12px_rgba(60,70,90,0.12)]";

const Totals = () => (
  <section className={card + " flex h-[116px] items-center gap-[46px] px-10 text-[26px]"}>
    <b>Cumulative</b>
    <span className="text-[#2b352f]"><b>Oil:</b> 380,874 bbl</span>
    <span className="text-[#7a6a58]"><b className="text-[#66574f]">Gas:</b> 874,480 mcf</span>
    <span className="text-[#12355b]"><b>Water:</b> 230,607 bbl</span>
    <span><b>BOE:</b> 526,621 boe</span>
  </section>
);

const details: [React.ReactNode, string][] = [
  ["Stream", "Oil"],
  ["Period", "23 - 58"],
  ["Decline Type", "Modified Hyperbolic"],
  [<>D<sub>i</sub></>, "0.030"],
  [<>Q<sub>i</sub></>, "3,211.015"],
  ["Fit", "R2: 0.95511 | R: 0.97730"],
  ["B Val", "1.200"],
  ["Terminal", "10%"],
];
const results: [string, string][] = [["EUR:", "487,486.577"], ["Recovered:", "225,391.24"], ["Remaining:", "262,095.337"]];

const rowGrid = "grid grid-cols-[320px_1fr] gap-x-10 text-[26px] leading-9 [&_dt]:text-right [&_dt]:font-bold [&_sub]:text-[22px] [&_sub]:font-semibold [&_sub]:leading-none";

const DeclineCard = () => (
  <section className={card + " px-10 pb-[76px] pt-10"}>
    <div className="flex items-start">
      <button aria-label="Settings" className={pressedButton + " mr-2 w-11"}><FaCog size={22} /></button>
      <button aria-label="Economics" className={smallButton + " mr-1.5 w-[38px]"}><FaDollarSign size={24} /></button>
      <button aria-label="Copy" className={smallButton + " mr-1.5 w-12"}><CopyIcon /></button>
      <button aria-label="Hide" className={pressedButton + " w-12"}><EyeOffIcon /></button>
      <button aria-label="Close" className={smallButton + " ml-auto w-[42px]"}><FaTimes size={22} /></button>
    </div>
    <dl className={rowGrid}>
      <dt className="text-[#bfae8c]">Name</dt><dd className="text-[#bfae8c]">Post 23 Months</dd>
      {details.map(([k, v]) => <React.Fragment key={v}><dt>{k}</dt><dd>{v}</dd></React.Fragment>)}
    </dl>
    <dl className={rowGrid + " mt-9"}>
      <dt><label htmlFor="model">Model:</label></dt>
      <dd className="pb-1.5">
        <div className="relative h-11 w-[438px]">
          <select id="model" className="h-full w-full appearance-none border-2 border-[#12355b] bg-white pl-2 leading-9 text-[#75787c]">
            <option>Truncate Recovered at Decline</option>
          </select>
          <Chevron />
        </div>
      </dd>
      {results.map(([k, v]) => <React.Fragment key={k}><dt>{k}</dt><dd>{v}</dd></React.Fragment>)}
    </dl>
  </section>
);

const Footer = () => (
  <footer className="flex h-[71px] shrink-0 items-center justify-between border-t-4 border-[#12355b] bg-[#1e2229] px-5 text-[19px] text-[#6f6f70]">
    <p>Copyright ©2009 - 2020 <a href="#home" className="font-semibold text-white">WellDatabase</a>, All rights reserved. <span className="font-semibold text-white">5.26.2020.54</span></p>
    <nav className="flex items-center">
      {["terms", "privacy", "contact", "blog", "twitter"].map((s, i) => (
        <React.Fragment key={s}>
          {i > 0 && <span className="mx-5 h-5 w-0.5 bg-[#5b5754]" />}
          <a href={"#" + s} className="text-[#e8e8e8]">{s}</a>
        </React.Fragment>
      ))}
    </nav>
  </footer>
);

export default function App() {
  return (
    <div className="relative flex h-screen flex-col overflow-hidden bg-white text-[#75787c] font-['Open_Sans',sans-serif]">
      <Header />
      <SubBar />
      <div className="flex min-h-0 flex-1">
        <MapPane />
        <div className="flex w-3.5 shrink-0 items-center justify-center bg-[#d9dbd9]">
          <div className="h-8 w-[7px] rounded-xs bg-[#2f3033]" />
        </div>
        <main className="flex min-w-0 flex-1 flex-col gap-10 overflow-hidden border-t-[14px] border-[#d9dbd8] bg-[#f7f8fa] px-[42px] pt-3">
          <Totals />
          <section className={card + " flex"}>
            <div className="min-w-0 flex-1 pt-[60px]">
              <div className="flex h-11 items-center pl-36 pr-[83px] text-2xl text-[#666]">
                <span>Zoom</span>
                <button className="ml-3 h-11 rounded-sm bg-[#e6ebf5] px-4 font-bold text-[#222]">All</button>
                <button aria-label="Chart menu" className="ml-auto">
                  <svg viewBox="0 0 34 26" className="h-[26px] w-[34px]" stroke="#666062" strokeWidth="5" strokeLinecap="round"><path d="M3 3h28M3 13h28M3 23h28" /></svg>
                </button>
              </div>
              <Chart />
            </div>
            <SeriesPanel />
          </section>
          <DeclineCard />
          <section className={card + " h-[200px]"} />
        </main>
      </div>
      <Footer />
      <button aria-label="Open chat" className="absolute bottom-10 right-10 z-20 flex size-[120px] items-center justify-center rounded-full bg-[#12355b] shadow-[0_4px_50px_rgba(0,0,0,0.2)]">
        <svg viewBox="0 0 56 64" className="h-16 w-14">
          <path d="M6 0h44q6 0 6 6v58l-16-7H6q-6 0-6-6V6q0-6 6-6z" fill="#fff" />
          <path d="M10 41q18 12 36 0" fill="none" stroke="#12355b" strokeWidth="4" strokeLinecap="round" />
        </svg>
      </button>
    </div>
  );
}
